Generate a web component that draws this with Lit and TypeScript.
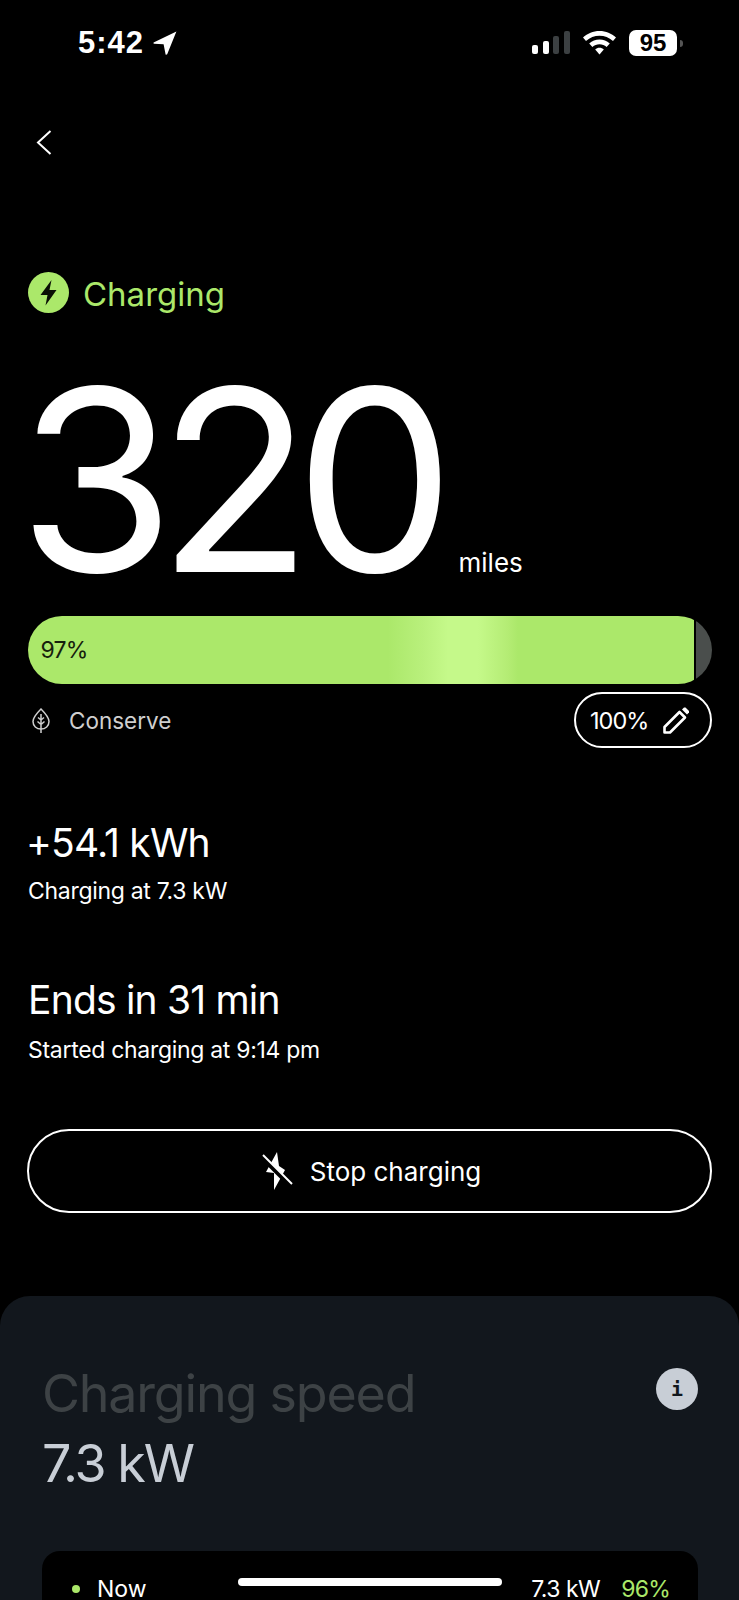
import { LitElement, html, css } from 'lit';
import { customElement } from 'lit/decorators.js';

@customElement('app-root')
export class AppRoot extends LitElement {
  static styles = css`
    :host {
      display: block;
      position: relative;
      width: 739px;
      height: 1600px;
      overflow: hidden;
      background: #000;
      color: #fff;
      font-family: Inter, 'Liberation Sans', sans-serif;
    }

    /* Status bar */
    .status {
      display: flex;
      align-items: center;
      height: 30px;
      padding: 28px 56px 0 78px;
    }
    .time {
      font-family: 'Liberation Sans', Inter, sans-serif;
      font-size: 31px;
      font-weight: 600;
      line-height: 30px;
      letter-spacing: 1px;
    }
    .arrow {
      margin-left: 9px;
    }
    .status-right {
      display: flex;
      align-items: center;
      margin-left: auto;
    }
    .wifi {
      margin-left: 13px;
    }
    .battery {
      display: flex;
      align-items: center;
      margin-left: 13px;
    }
    .battery-body {
      width: 48px;
      height: 26px;
      border-radius: 7px;
      background: #fff;
      color: #000;
      font-family: 'Liberation Sans', sans-serif;
      font-size: 24px;
      font-weight: 700;
      line-height: 26px;
      text-align: center;
    }
    .battery-nub {
      width: 3px;
      height: 7px;
      margin-left: 3px;
      border-radius: 0 3px 3px 0;
      background: #555;
    }

    .back {
      display: block;
      margin: 72px 0 0 36px;
    }

    /* Hero */
    .main {
      padding: 0 27px 0 28px;
    }
    .state {
      display: flex;
      align-items: center;
      gap: 14px;
      margin-top: 118px;
      color: #abe86a;
      font-size: 33px;
      line-height: 42px;
    }
    .state svg {
      margin-top: -4px;
    }
    .range {
      display: flex;
      align-items: baseline;
      box-sizing: border-box;
      height: 301px;
      padding-top: 13px;
    }
    .range-num {
      margin-left: -10px;
      font-size: 254px;
      font-weight: 400;
      line-height: 304px;
      letter-spacing: -17.5px;
    }
    .range-unit {
      margin-left: 21px;
      font-size: 26px;
    }

    /* Battery bar */
    .bar {
      display: flex;
      gap: 2px;
      height: 68px;
      margin-left: -0.5px;
      border-radius: 34px;
      overflow: hidden;
    }
    .bar-fill {
      flex: 1;
      display: flex;
      align-items: center;
      padding-left: 13px;
      background: linear-gradient(
        90deg,
        #abe86a 0,
        #abe86a 360px,
        #b9f07c 395px,
        #c5f98a 420px,
        #c5f98a 450px,
        #b4ec74 480px,
        #abe86a 490px
      );
      color: #16200c;
      font-size: 23px;
      letter-spacing: -0.8px;
    }
    .bar-rest {
      width: 16px;
      background: #4a4e4c;
    }
    .limits {
      display: flex;
      align-items: center;
      justify-content: space-between;
      margin-top: 8px;
    }
    .conserve {
      display: flex;
      align-items: center;
      gap: 19px;
      padding: 1px 0 0 4px;
      color: #cfcfcf;
      font-size: 22.5px;
    }
    .limit {
      display: flex;
      align-items: center;
      gap: 15px;
      box-sizing: border-box;
      width: 138px;
      height: 56px;
      padding-left: 14px;
      border: 2px solid #fff;
      border-radius: 28px;
      font-size: 23.5px;
      letter-spacing: -1px;
    }

    /* Stats */
    .stat-title {
      font-size: 39px;
      line-height: 46px;
      letter-spacing: -0.8px;
    }
    .stat-sub {
      margin-top: 11px;
      font-size: 23px;
      line-height: 28px;
      letter-spacing: -0.3px;
    }
    .stat-energy {
      margin-top: 72px;
    }
    .stat-energy .stat-title {
      margin-left: -2px;
    }
    .stat-ends {
      margin-top: 72px;
    }
    .stat-ends .stat-sub {
      margin-top: 13px;
    }
    .stop {
      display: flex;
      align-items: center;
      justify-content: center;
      gap: 17px;
      box-sizing: border-box;
      height: 84px;
      margin: 65px 0 0 -1px;
      padding-left: 4px;
      border: 2px solid #fff;
      border-radius: 42px;
      font-size: 26px;
    }

    /* Charging speed sheet */
    .sheet {
      margin-top: 83px;
      height: 400px;
      padding: 67px 41px 0 42px;
      border-radius: 30px 30px 0 0;
      background: #12171d;
    }
    .sheet-head {
      display: flex;
      align-items: flex-start;
      justify-content: space-between;
    }
    .sheet-title {
      color: #3d4245;
      font-size: 52px;
      line-height: 62px;
      letter-spacing: -1.2px;
    }
    .sheet-value {
      margin-top: 8px;
      color: #c8ced6;
      font-size: 52px;
      line-height: 62px;
      letter-spacing: -2px;
    }
    .info {
      width: 42px;
      height: 42px;
      margin-top: 5px;
      border-radius: 50%;
      background: #c8ced6;
      color: #12171d;
      font-family: 'DejaVu Sans Mono', monospace;
      font-size: 20px;
      font-weight: 700;
      line-height: 42px;
      text-align: center;
    }
    .history {
      margin-top: 56px;
      height: 200px;
      padding: 22px 28px 0 30px;
      border-radius: 18px;
      background: #000;
    }
    .row {
      display: flex;
      align-items: center;
      font-size: 23px;
      line-height: 32px;
    }
    .dot {
      width: 8px;
      height: 8px;
      margin-right: 17px;
      border-radius: 50%;
      background: #abe86a;
    }
    .row-kw {
      margin-left: auto;
      letter-spacing: -0.5px;
    }
    .row-pct {
      margin-left: 21px;
      color: #abe86a;
      letter-spacing: -0.8px;
    }

    .home {
      position: absolute;
      left: 238px;
      bottom: 14px;
      width: 264px;
      height: 8px;
      border-radius: 4px;
      background: #fff;
    }
    svg {
      display: block;
      flex: none;
    }
  `;

  render() {
    return html`
      <div class="status">
        <span class="time">5:42</span>
        <svg class="arrow" width="24" height="24" viewBox="0 0 24 24" fill="#fff">
          <path d="M23.4 0.4 L0.6 11.6 Q0 12.6 1 12.8 L10.6 13.2 L12.6 23.4 Q13.2 24 14.2 23.2 Z" />
        </svg>
        <div class="status-right">
          <svg width="38" height="24" viewBox="0 0 38 24">
            <rect x="0" y="14" width="6" height="9" rx="2" fill="#fff" />
            <rect x="11" y="10" width="6" height="13" rx="2" fill="#fff" />
            <rect x="21" y="5" width="6" height="18" rx="2" fill="#3c4042" />
            <rect x="32" y="0" width="6" height="23" rx="2" fill="#3c4042" />
          </svg>
          <svg class="wifi" width="33" height="24" viewBox="0 0 33 24" fill="#fff">
            <path d="M16.5 0C10 0 4.6 2.4 0 6.6L3 10C7 6.6 11.4 4.8 16.5 4.8S26 6.6 30 10L33 6.6C28.4 2.4 23 0 16.5 0Z" />
            <path d="M16.5 8.4C12.5 8.4 9.2 9.8 6.2 12.4L9.4 16C11.4 14.2 13.8 13.3 16.5 13.3S21.6 14.2 23.6 16L26.8 12.4C23.8 9.8 20.5 8.4 16.5 8.4Z" />
            <path d="M16.5 16.8C14.8 16.8 13.4 17.3 12.2 18.4L16.5 23.4L20.8 18.4C19.6 17.3 18.2 16.8 16.5 16.8Z" />
          </svg>
          <div class="battery">
            <div class="battery-body">95</div>
            <div class="battery-nub"></div>
          </div>
        </div>
      </div>

      <svg class="back" width="16" height="25" viewBox="0 0 16 25" fill="none" stroke="#fff" stroke-width="2">
        <path d="M14.5 1 L2 12.5 L14.5 24" />
      </svg>

      <div class="main">
        <div class="state">
          <svg width="41" height="41" viewBox="0 0 41 41">
            <circle cx="20.5" cy="20.5" r="20.5" fill="#abe86a" />
            <path d="M23.5 8 L12.5 23 H19.5 L17.5 33.5 L28.5 18 H21.5 Z" fill="#0b0f06" />
          </svg>
          <span>Charging</span>
        </div>
        <div class="range">
          <span class="range-num">320</span>
          <span class="range-unit">miles</span>
        </div>
        <div class="bar">
          <div class="bar-fill">97%</div>
          <div class="bar-rest"></div>
        </div>
        <div class="limits">
          <div class="conserve">
            <svg width="18" height="26" viewBox="0 0 18 26" fill="none" stroke="#cfcfcf" stroke-width="1.5">
              <path d="M9 1 C5 5 1 9 1 13.5 C1 18 4.5 21 9 21 C13.5 21 17 18 17 13.5 C17 9 13 5 9 1Z" />
              <path d="M9 6 V25 M9 12 L6 9.5 M9 12 L12 9.5 M9 16.5 L5.5 13.5 M9 16.5 L12.5 13.5" />
            </svg>
            <span>Conserve</span>
          </div>
          <div class="limit">
            <span>100%</span>
            <svg width="27" height="27" viewBox="0 0 27 27">
              <path d="M1.5 25.5 V20 L16.5 5 L22 10.5 L7 25.5 Z" fill="none" stroke="#fff" stroke-width="2.6" stroke-linejoin="round" />
              <path d="M19 2.5 L21 0.5 H22.5 L26 4 V5.5 L24 7.5 Z" fill="#fff" />
            </svg>
          </div>
        </div>

        <div class="stat-energy">
          <div class="stat-title">+54.1 kWh</div>
          <div class="stat-sub">Charging at 7.3 kW</div>
        </div>
        <div class="stat-ends">
          <div class="stat-title">Ends in 31 min</div>
          <div class="stat-sub">Started charging at 9:14 pm</div>
        </div>

        <div class="stop">
          <svg width="31" height="40" viewBox="0 0 31 40" fill="#fff">
            <path d="M15 1 L17 15 L23 19 L12 39 L12 22 L4 21 Z" />
            <path d="M0 6 L29 35" stroke="#000" stroke-width="5" />
            <path d="M1 4 L30 33" stroke="#fff" stroke-width="2" />
          </svg>
          <span>Stop charging</span>
        </div>
      </div>

      <div class="sheet">
        <div class="sheet-head">
          <div>
            <div class="sheet-title">Charging speed</div>
            <div class="sheet-value">7.3 kW</div>
          </div>
          <div class="info">i</div>
        </div>
        <div class="history">
          <div class="row">
            <span class="dot"></span>
            <span>Now</span>
            <span class="row-kw">7.3 kW</span>
            <span class="row-pct">96%</span>
          </div>
        </div>
      </div>

      <div class="home"></div>
    `;
  }
}
